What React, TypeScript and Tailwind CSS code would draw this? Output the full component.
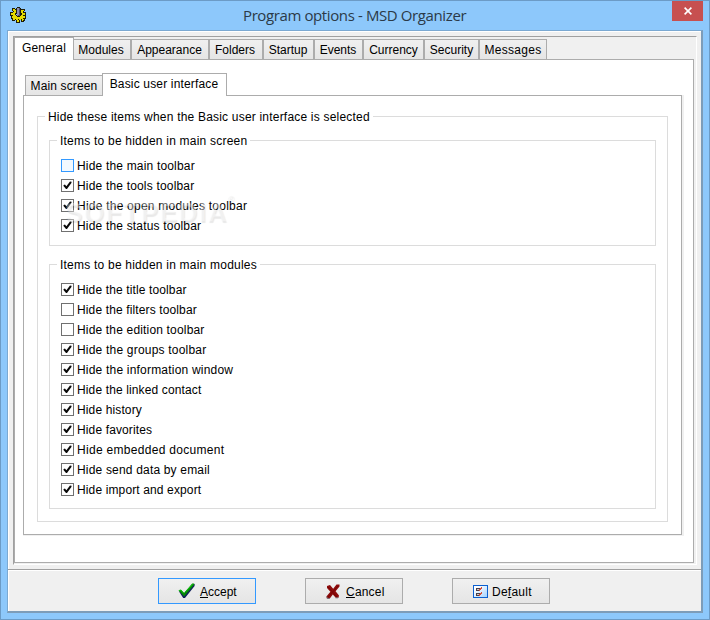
import React from 'react';

type Item = { label: string; checked: boolean; hot?: boolean; cls?: string };

const mainScreen: Item[] = [
  { label: 'Hide the main toolbar', checked: false, hot: true, cls: 'tracking-[0.18px]' },
  { label: 'Hide the tools toolbar', checked: true, cls: 'tracking-[0.18px]' },
  { label: 'Hide the open modules toolbar', checked: true, cls: 'tracking-[0.23px]' },
  { label: 'Hide the status toolbar', checked: true, cls: 'tracking-[0.18px]' },
];

const mainModules: Item[] = [
  { label: 'Hide the title toolbar', checked: true },
  { label: 'Hide the filters toolbar', checked: false },
  { label: 'Hide the edition toolbar', checked: false, cls: 'tracking-[0.17px]' },
  { label: 'Hide the groups toolbar', checked: true, cls: 'tracking-[0.2px]' },
  { label: 'Hide the information window', checked: true, cls: 'tracking-[0.2px]' },
  { label: 'Hide the linked contact', checked: true },
  { label: 'Hide history', checked: true },
  { label: 'Hide favorites', checked: true },
  { label: 'Hide embedded document', checked: true, cls: 'tracking-[0.3px]' },
  { label: 'Hide send data by email', checked: true, cls: 'tracking-[0.18px]' },
  { label: 'Hide import and export', checked: true },
];

const tabs = [
  { label: 'Modules', w: 'w-[58px] pr-[2px]' },
  { label: 'Appearance', w: 'w-[78px] pr-px' },
  { label: 'Folders', w: 'w-[54px] pr-[2px]' },
  { label: 'Startup', w: 'w-[51px] pr-px' },
  { label: 'Events', w: 'w-[49px] pr-px' },
  { label: 'Currency', w: 'w-[61px]' },
  { label: 'Security', w: 'w-[55px]' },
  { label: 'Messages', w: 'w-[68px] tracking-[0.3px]' },
];

function Check({ item }: { item: Item }) {
  return (
    <div className="flex h-5 items-start">
      <span
        className={
          item.hot
            ? 'mt-1 h-[13px] w-[13px] border border-[#3399ff] bg-[#f3f9ff]'
            : 'mt-1 h-[13px] w-[13px] border border-[#707070] bg-white'
        }
      >
        {item.checked && (
          <svg width="11" height="11" viewBox="0 0 11 11" className="block">
            <path d="M1.5 5.2 L2.9 4.4 L4.4 6.2 L8 1.5 L9.6 1.8 L9.4 3 L5 8.9 L4 8.9 L1.5 6.1 Z" fill="#0a0a0a" />
          </svg>
        )}
      </span>
      <span className={'ml-[3px] mt-1 leading-[15px] ' + (item.cls ?? 'tracking-[0.13px]')}>{item.label}</span>
    </div>
  );
}

function Group({ title, items, cls }: { title: string; items: Item[]; cls: string }) {
  return (
    <fieldset className={'w-[607px] border border-[#dcdcdc] ' + cls}>
      <legend className="ml-[7px] h-[15px] px-[3px] leading-[17px] tracking-[0.22px]">{title}</legend>
      <div className="ml-[11px] mt-[7px]">
        {items.map((i) => (
          <Check key={i.label} item={i} />
        ))}
      </div>
    </fieldset>
  );
}

const gearRows = [
  '.......KKK......',
  '..KKK.KGGDK.....',
  '..KYYKKGGDKKKKK.',
  '..KYYYKGGDKYYYK.',
  '...KYYKGGDKYYK..',
  'KKKYYYKGGDKYYKKK',
  'KYYYYKKGGDKKYYYK',
  'KYYYYK.GGDKKYYYK',
  'KKKYYYKGDDKYYKKK',
  '.KYYYYYKKKYYYYYK',
  '.KYYYYYYYYYYYYYK',
  '.KKYYYYYYYYYYKKK',
  '..KYYKYYKYYKYYK.',
  '..KKK.KYYK.KYKK.',
  '......KYYK.KKK..',
  '......KKKK......',
];

const gearColors: Record<string, string> = { K: '#1f1d08', Y: '#e6dc00', G: '#9090b4', D: '#50506e' };

function GearIcon() {
  return (
    <svg width="16" height="16" viewBox="0 0 16 16" shapeRendering="crispEdges">
      {gearRows.flatMap((row, y) =>
        row.split('').map((c, x) =>
          c === '.' ? null : <rect key={x + '-' + y} x={x} y={y} width="1" height="1" fill={gearColors[c]} />,
        ),
      )}
    </svg>
  );
}

function AcceptIcon() {
  return (
    <svg width="17" height="16" viewBox="0 0 17 16">
      <path d="M1 8.5 L3.4 7.4 L6.2 10.6 L14.5 1 L16.6 1 L16.6 3 L7 14.9 L5.2 14.9 Z" fill="#12205c" />
      <path d="M.6 7.4 L3 6.8 L6 10 L14.2 .6 L16.2 .6 L16.2 1.8 L6.1 13.6 Z" fill="#058a05" />
      <path d="M.8 7.6 L3 7 L5.6 10.2 M7.4 9 L14.6 1.2" stroke="#10c810" strokeWidth="1" fill="none" />
    </svg>
  );
}

function CancelIcon() {
  return (
    <svg width="14" height="15" viewBox="0 0 14 15">
      <path
        d="M1 2 L4 1.1 L7.2 4.8 L10.5 .6 L13.5 .6 L13.5 2.6 L9.6 7.2 L13 11.4 L12.5 13.8 L10 14 L6.8 10.4 L3.8 14.4 L.8 14.4 L.6 12.2 L4.4 7.7 L1 4 Z"
        fill="#8c0b0b"
      />
      <path d="M2 3 L11 13 M12 2 L2 13" stroke="#780303" strokeWidth="1" />
      <path d="M.6 12.5 L1.5 14.5 H3.5 M9.5 13.8 H12" stroke="#77737b" strokeWidth="1" fill="none" />
    </svg>
  );
}

function DefaultIcon() {
  return (
    <svg width="15" height="13" viewBox="0 0 15 13" shapeRendering="crispEdges">
      <defs>
        <linearGradient id="pane" x1="0" y1="0" x2="1" y2="1">
          <stop offset="0.2" stopColor="#fff" />
          <stop offset="1" stopColor="#9fd0ff" />
        </linearGradient>
      </defs>
      <rect x=".5" y=".5" width="14" height="12" fill="url(#pane)" stroke="#0b5fd0" />
      <rect x="3" y="3" width="4" height="3" fill="#4a4048" />
      <rect x="4" y="4" width="2" height="1" fill="#cfcaca" />
      <rect x="3" y="8" width="4" height="3" fill="#4a4048" />
      <rect x="4" y="9" width="2" height="1" fill="#cfcaca" />
      <path d="M5 4h1v1h1v-1h1v-1h1v-1h-1v1h-1v1h-1zM5 9h1v1h1v-1h1v-1h1v-1h-1v1h-1v1h-1z" fill="#d4513c" />
      <path d="M6 5h1v-1h1v-1h1v1h-1v1h-1v1h-1zM6 10h1v-1h1v-1h1v1h-1v1h-1v1h-1z" fill="#d4513c" />
    </svg>
  );
}

const buttonBase = 'flex h-[26px] w-[98px] items-center border bg-linear-to-b from-[#f0f0f0] to-[#e5e5e5] ';
const tabBase = 'border border-[#acacac] bg-linear-to-b from-[#f0f0f0] to-[#e5e5e5] text-center ';

export default function App() {
  return (
    <div className="flex h-[620px] w-[710px] flex-col overflow-hidden border border-[#6c9bc6] bg-[#8dc8fb] font-['Liberation_Sans',Arial,sans-serif] text-[12px] text-black">
      <header className="flex h-[29px] shrink-0 items-start">
        <div className="ml-[9px] mt-[6px] w-[59px]">
          <GearIcon />
        </div>
        <h1 className="ml-[174px] mt-[4px] w-[260px] whitespace-nowrap font-['Open_Sans','Noto_Sans',sans-serif] text-[15px] leading-[21px] tracking-[-0.39px] text-[#2b3a48]">
          Program options - MSD Organizer
        </h1>
        <button className="ml-auto mr-[6px] flex h-5 w-[31px] items-center justify-center bg-[#c75050]">
          <svg width="8" height="8" viewBox="0 0 8 8">
            <path d="M.6 .6 L7.4 7.4 M7.4 .6 L.6 7.4" stroke="#fff" strokeWidth="1.6" />
          </svg>
        </button>
      </header>

      <main className="ml-[6px] flex h-[583px] w-[696px] shrink-0 flex-col border border-b-2 border-r-2 border-[#7ba9d2] border-b-[#7d9cb8] border-r-[#7d9cb8] bg-[#f0f0f0]">
        <div className="h-[538px] border-l border-t border-white pl-1 pt-1">
          <div className="h-[529px] w-[684px] border border-b-white border-l-[#a0a0a0] border-r-white border-t-[#a0a0a0]">
            <div className="relative z-10 -mb-px flex h-[23px] items-end">
              <div className="h-[23px] w-[60px] border border-b-0 border-[#acacac] bg-white text-center leading-[20px] tracking-[0.2px]">General</div>
              {tabs.map((t, i) => (
                <div key={t.label} className={tabBase + 'h-[21px] leading-[20px] ' + t.w + (i === 0 ? ' -ml-px' : '')}>
                  {t.label}
                </div>
              ))}
            </div>
            <div className="h-[504px] w-[680px] border border-[#acacac] bg-white pl-2 pt-[13px]">
              <div className="relative z-10 -mb-px flex h-[23px] items-end pl-[2px]">
                <div className={tabBase + 'h-[21px] w-[78px] leading-[20px] tracking-[0.13px]'}>Main screen</div>
                <div className="-ml-px h-[23px] w-[125px] border border-b-0 border-[#acacac] bg-white pr-px text-center leading-[20px] tracking-[0.16px]">
                  Basic user interface
                </div>
              </div>
              <div className="h-[441px] w-[661px] border-b border-r-2 border-[#f0f0f0]">
                <div className="relative h-[440px] w-[659px] border border-[#acacac] pl-[13px] pt-[13px]">
                  <fieldset className="h-[413px] w-[631px] border border-[#dcdcdc]">
                    <legend className="ml-[7px] h-[15px] px-[3px] leading-[17px] tracking-[0.2px]">
                      Hide these items when the Basic user interface is selected
                    </legend>
                    <div className="ml-[11px] mt-[9px] flex flex-col gap-[11px]">
                      <Group title="Items to be hidden in main screen" items={mainScreen} cls="h-[113px]" />
                      <Group title="Items to be hidden in main modules" items={mainModules} cls="h-[252px]" />
                    </div>
                  </fieldset>
                  <div className="pointer-events-none absolute left-[41px] top-[100px] flex whitespace-nowrap text-[26px] leading-[32px] font-bold tracking-[1.6px] text-white/40 [text-shadow:1px_2px_1px_rgba(0,0,0,0.09)]">
                    SOFTPEDIA
                    <span className="-ml-px -mt-[6px] text-[9px] leading-[16px]">®</span>
                  </div>
                </div>
              </div>
            </div>
          </div>
        </div>
        <footer className="flex flex-1 border-t border-[#a0a0a0]">
          <div className="flex flex-1 gap-[49px] border-l border-t border-white pl-[149px] pt-[7px]">
            <button className={buttonBase + 'border-[#3399ff] pl-[19px]'}>
              <AcceptIcon />
              <span className="ml-[5px] mt-[2px]"><u>A</u>ccept</span>
            </button>
            <button className={buttonBase + 'border-[#acacac] pl-[20px]'}>
              <CancelIcon />
              <span className="ml-[6px] mt-[2px] tracking-[0.2px]"><u>C</u>ancel</span>
            </button>
            <button className={buttonBase + 'border-[#acacac] pl-[20px]'}>
              <DefaultIcon />
              <span className="ml-[4px] mt-[2px] tracking-[0.25px]">De<u>f</u>ault</span>
            </button>
          </div>
        </footer>
      </main>
    </div>
  );
}
